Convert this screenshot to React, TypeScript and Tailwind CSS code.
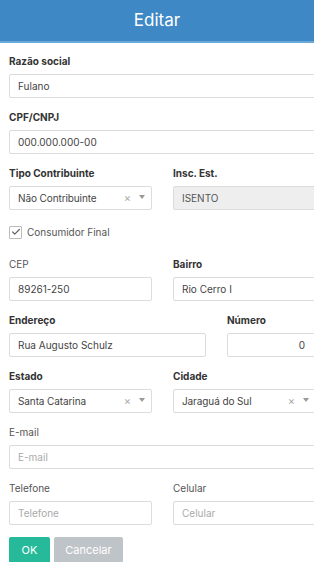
import { Check } from 'lucide-react'

const font = { fontFamily: 'Inter, "Liberation Sans", sans-serif' }

function Label({ text, bold = true }: { text: string; bold?: boolean }) {
  return (
    <div className={`h-[12px] leading-[12px] text-[10px] mb-[7px] text-[#333] ${bold ? 'font-bold' : 'font-normal text-[#555]'}`}>
      {text}
    </div>
  )
}

function Input({ value, placeholder, disabled, right }: { value?: string; placeholder?: string; disabled?: boolean; right?: boolean }) {
  return (
    <div
      className={`h-[24px] border border-[#dcdcdc] rounded-[2px] px-[8px] flex items-center text-[10px] ${
        disabled ? 'bg-[#eeeeee] text-[#555]' : 'bg-white text-[#444]'
      } ${right ? 'justify-end pr-[10px]' : ''}`}
    >
      {value ? <span>{value}</span> : <span className="text-[#aaa]">{placeholder}</span>}
    </div>
  )
}

function Select({ value }: { value: string }) {
  return (
    <div className="h-[24px] border border-[#dcdcdc] rounded-[2px] pl-[8px] pr-[6px] flex items-center text-[10px] text-[#444] bg-white">
      <span className="flex-1 tracking-[-0.1px]">{value}</span>
      <span className="text-[#aaa] text-[11px] leading-none mr-[8px]">×</span>
      <span className="w-0 h-0 border-l-[3px] border-r-[3px] border-t-[4px] border-l-transparent border-r-transparent border-t-[#999] mb-[2px]" />
    </div>
  )
}

function Field({ label, bold, children }: { label: string; bold?: boolean; children: React.ReactNode }) {
  return (
    <div className="mb-[13px]">
      <Label text={label} bold={bold} />
      {children}
    </div>
  )
}

export default function App() {
  return (
    <div className="w-[314px] h-[562px] overflow-hidden bg-white" style={font}>
      {/* Header */}
      <div className="h-[43px] bg-[#3d88c5] border-b-2 border-[#6aa9da] flex items-center justify-center">
        <span className="text-white text-[17px]">Editar</span>
      </div>

      <div className="w-[307px] ml-[9px] pt-[12px]">
        <Field label="Razão social">
          <Input value="Fulano" />
        </Field>
        <Field label="CPF/CNPJ">
          <Input value="000.000.000-00" />
        </Field>

        <div className="grid grid-cols-2 gap-x-[21px]">
          <Field label="Tipo Contribuinte">
            <Select value="Não Contribuinte" />
          </Field>
          <Field label="Insc. Est.">
            <Input value="ISENTO" disabled />
          </Field>
        </div>

        {/* Checkbox */}
        <div className="flex items-center gap-[5px] h-[14px] mt-[2px] mb-[19px]">
          <div className="w-[13px] h-[13px] border border-[#bbb] rounded-[1px] flex items-center justify-center bg-white">
            <Check size={10} strokeWidth={3} className="text-[#666]" />
          </div>
          <span className="text-[10px] text-[#555]">Consumidor Final</span>
        </div>

        <div className="grid grid-cols-2 gap-x-[21px]">
          <Field label="CEP" bold={false}>
            <Input value="89261-250" />
          </Field>
          <Field label="Bairro">
            <Input value="Rio Cerro I" />
          </Field>
        </div>

        <div className="grid grid-cols-[197px_1fr] gap-x-[21px]">
          <Field label="Endereço">
            <Input value="Rua Augusto Schulz" />
          </Field>
          <Field label="Número">
            <Input value="0" right />
          </Field>
        </div>

        <div className="grid grid-cols-2 gap-x-[21px]">
          <Field label="Estado">
            <Select value="Santa Catarina" />
          </Field>
          <Field label="Cidade">
            <Select value="Jaraguá do Sul" />
          </Field>
        </div>

        <Field label="E-mail" bold={false}>
          <Input placeholder="E-mail" />
        </Field>

        <div className="grid grid-cols-2 gap-x-[21px]">
          <Field label="Telefone" bold={false}>
            <Input placeholder="Telefone" />
          </Field>
          <Field label="Celular" bold={false}>
            <Input placeholder="Celular" />
          </Field>
        </div>

        <div className="flex gap-[4px] -mt-[1px]">
          <button className="w-[41px] h-[26px] bg-[#26b99a] text-white text-[11px] rounded-[2px]">OK</button>
          <button className="w-[69px] h-[26px] bg-[#bfc4c8] text-white text-[11px] rounded-[2px]">Cancelar</button>
        </div>
      </div>
    </div>
  )
}
